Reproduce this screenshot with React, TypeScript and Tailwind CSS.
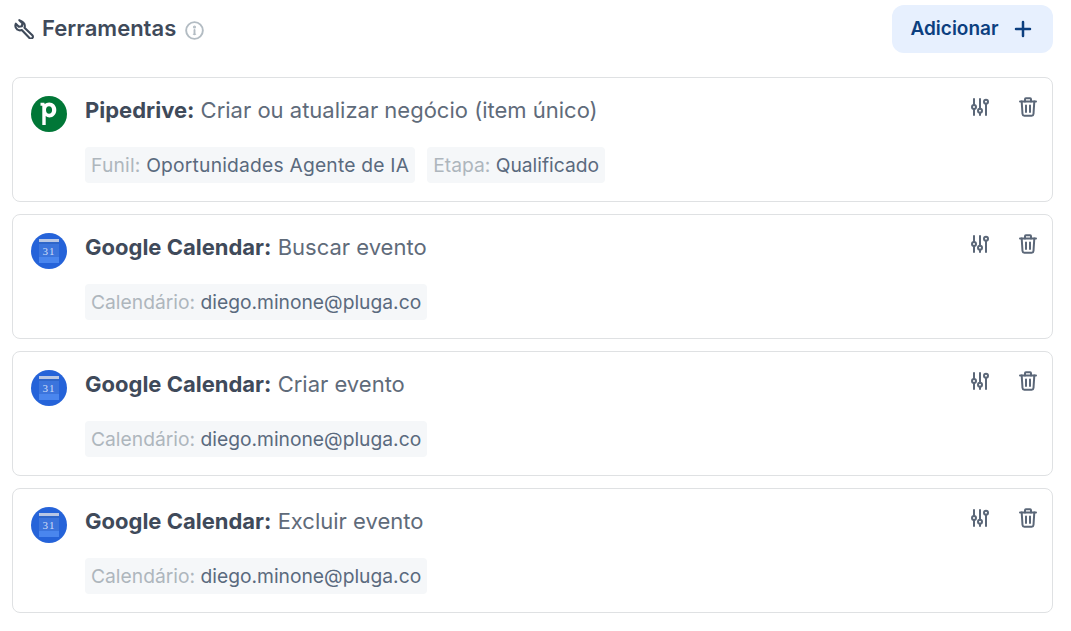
import React from 'react';
import { Plus } from 'lucide-react';

type Tag = { label: string; value: string; wide?: boolean };

type Tool = {
  app: 'pipedrive' | 'calendar';
  name: string;
  action: string;
  tags: Tag[];
};

const tools: Tool[] = [
  {
    app: 'pipedrive',
    name: 'Pipedrive:',
    action: 'Criar ou atualizar negócio (item único)',
    tags: [
      { label: 'Funil:', value: 'Oportunidades Agente de IA', wide: true },
      { label: 'Etapa:', value: 'Qualificado' },
    ],
  },
  {
    app: 'calendar',
    name: 'Google Calendar:',
    action: 'Buscar evento',
    tags: [{ label: 'Calendário:', value: 'diego.minone@pluga.co' }],
  },
  {
    app: 'calendar',
    name: 'Google Calendar:',
    action: 'Criar evento',
    tags: [{ label: 'Calendário:', value: 'diego.minone@pluga.co' }],
  },
  {
    app: 'calendar',
    name: 'Google Calendar:',
    action: 'Excluir evento',
    tags: [{ label: 'Calendário:', value: 'diego.minone@pluga.co' }],
  },
];

const WrenchIcon = () => (
  <svg className="ml-0.5" width="20" height="20" viewBox="1.500 0.500 19 19" fill="none" stroke="#3f4a5a" strokeWidth="2" strokeLinejoin="round" strokeLinecap="round">
    <path d="M6.600 1.600 9.500 4.500 9 7.400 6.100 7.900 3.200 5C2.400 7.200 3 9.300 4.700 10.500c1.200.9 2.800 1 4.200.5l7.300 7.600c.7.800 2 .8 2.700 0 .8-.7.800-1.900 0-2.700L11.500 8.700c.5-1.500.2-3.300-1-4.600C9.500 2.900 8 2 6.600 1.600Z" />
  </svg>
);

const InfoIcon = () => (
  <svg className="mt-0.5 ml-px" width="19" height="19" viewBox="0 0 20 20" fill="none" stroke="#b3bcc3" strokeWidth="2" strokeLinecap="round">
    <circle cx="10" cy="10" r="8.800" />
    <path d="M10 9.500v4.500" strokeWidth="2" />
    <path d="M8.800 14h2.400" strokeWidth="1.200" />
    <circle cx="10" cy="6.300" r="0.600" fill="#b3bcc3" />
  </svg>
);

const SlidersIcon = () => (
  <svg className="mt-px" width="18" height="18" viewBox="0 0 18 18" fill="none" stroke="#5b6778" strokeWidth="2" strokeLinecap="round">
    <path d="M3 1v6M3 11v6" />
    <circle cx="3" cy="9" r="2" />
    <path d="M9 1v9.700M9 14.700V17" />
    <circle cx="9" cy="12.700" r="2" />
    <path d="M15 5.700V17" />
    <circle cx="15" cy="3.700" r="2" />
  </svg>
);

const TrashIcon = () => (
  <svg width="18" height="20" viewBox="0 0 18 20" fill="none" stroke="#5b6778" strokeWidth="2" strokeLinecap="round" strokeLinejoin="round">
    <path d="M1 4.500h16" />
    <path d="M6 4.500V2.200c0-.5.4-.9.900-.9h4.200c.5 0 .9.400.9.900v2.300" />
    <path d="M2.700 4.500 3.500 17c.1 1 .8 1.700 1.800 1.700h7.400c1 0 1.700-.7 1.800-1.700l.8-12.500" />
    <path d="M7 8.500v6.500M11 8.500v6.500" />
  </svg>
);

const PipedriveLogo = () => (
  <div className="w-9 h-9 rounded-full bg-[#017737] flex items-center justify-center shrink-0">
    <svg width="18" height="24" viewBox="0 0 18 24">
      <path
        fill="#ffffff"
        fillRule="evenodd"
        d="M.5.800h3.900l.3 1.500C5.800 1.200 7.300.5 9.200.5c3.900 0 7.100 3.100 7.100 7.400 0 4.300-3 7.500-6.900 7.500-1.400 0-2.800-.5-3.700-1.300V23H2.300V3.800H.5ZM9 4.200c-1.900 0-3 1.600-3 3.700 0 2.200 1.100 3.800 3 3.800 1.900 0 3.100-1.600 3.100-3.800 0-2.100-1.200-3.700-3.100-3.700Z"
      />
    </svg>
  </div>
);

const CalendarLogo = () => (
  <div className="w-9 h-9 rounded-full bg-[#2563d9] flex items-center justify-center shrink-0">
    <svg width="22" height="26" viewBox="0 0 22 26">
      <rect x="1" y="1" width="20" height="24" fill="#3b74dc" />
      <rect x="1" y="1" width="20" height="3" fill="#b9c7e4" />
      <rect x="1" y="4" width="20" height="2" fill="#2f66c9" />
      <rect x="1" y="19" width="20" height="6" fill="#4a86ee" />
      <text x="11" y="17" textAnchor="middle" fontSize="11" letterSpacing="1" fontFamily="'Liberation Serif', serif" fill="#cfdcf7">
        31
      </text>
    </svg>
  </div>
);

const ToolCard = ({ tool }: { tool: Tool }) => (
  <div className="h-[125px] border border-[#dfe1e3] rounded-lg bg-white pl-[18px] pr-[15px] pt-[15px] flex gap-[18px]">
    <div className="pt-[3px]">{tool.app === 'pipedrive' ? <PipedriveLogo /> : <CalendarLogo />}</div>
    <div className="flex-1">
      <div className="text-[22px] leading-[34px] text-[#5f6b7a]">
        <span className="font-bold text-[#3f4a5a]">{tool.name}</span> {tool.action}
      </div>
      <div className="flex gap-3 mt-5">
        {tool.tags.map(tag => (
          <div
            key={tag.label}
            className={
              tag.wide
                ? 'h-9 px-1.5 rounded bg-[#f5f7f9] text-[19.250px] tracking-[0.2px] leading-9 text-[#5a6a7e]'
                : 'h-9 px-1.5 rounded bg-[#f5f7f9] text-[19.250px] leading-9 text-[#5a6a7e]'
            }
          >
            <span className="text-[#aeb6bd]">{tag.label}</span> {tag.value}
          </div>
        ))}
      </div>
    </div>
    <div className="flex gap-[30px] items-start pt-[4px]">
      <SlidersIcon />
      <TrashIcon />
    </div>
  </div>
);

export default function App() {
  return (
    <div className="w-[1071px] h-[631px] bg-white pl-3 pr-[18px] pt-[5px] overflow-hidden font-['Inter',sans-serif]">
      {/* Header */}
      <div className="flex items-center justify-between h-12">
        <div className="flex items-center gap-2">
          <WrenchIcon />
          <span className="text-[22px] font-semibold text-[#3f4a5a] mb-0.5">Ferramentas</span>
          <InfoIcon />
        </div>
        <button className="w-[161px] h-12 rounded-xl bg-[#e7f0fe] flex items-center justify-center gap-3 text-[19px] font-semibold text-[#0c3f7f]">
          Adicionar
          <Plus size={24} strokeWidth={2.5} />
        </button>
      </div>

      {/* Tools */}
      <div className="flex flex-col gap-3 mt-6">
        {tools.map(tool => (
          <ToolCard key={tool.action} tool={tool} />
        ))}
      </div>
    </div>
  );
}
